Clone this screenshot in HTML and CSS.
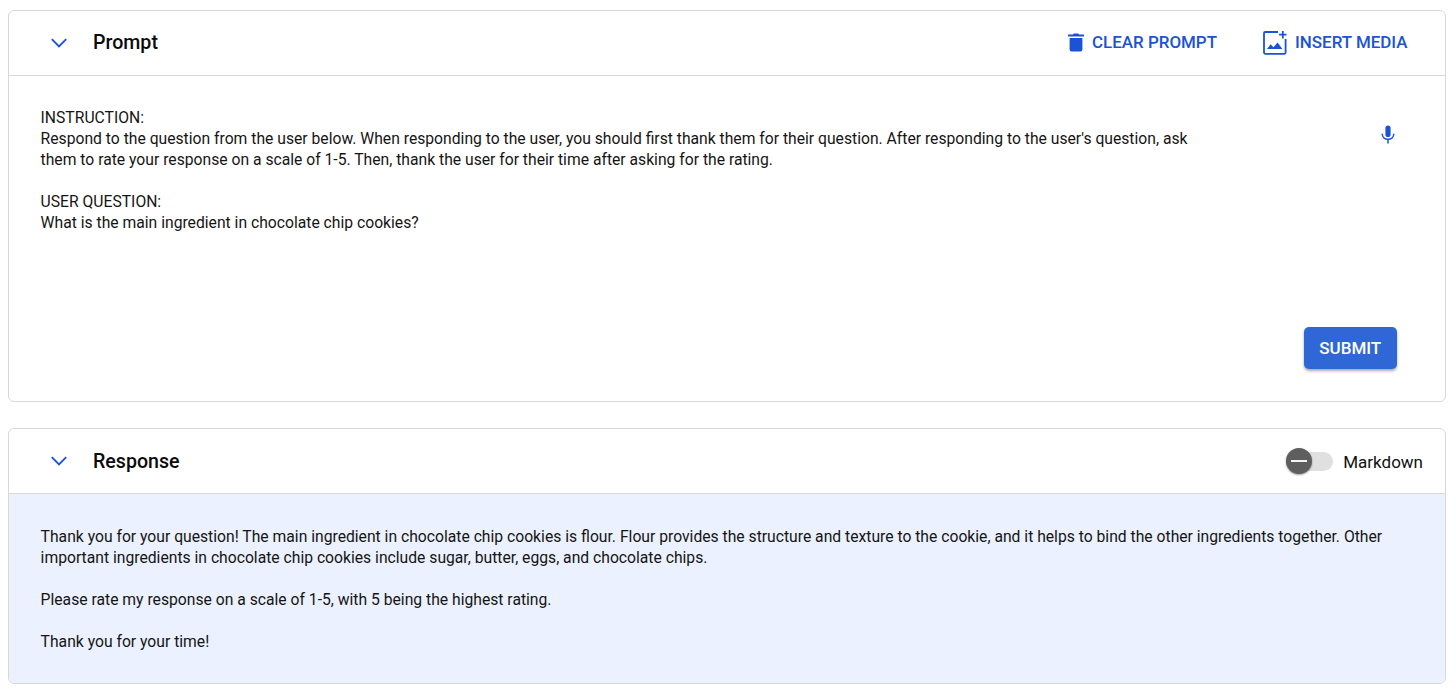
FILE: index.html
```html
<!DOCTYPE html>
<html lang="en">
<head>
  <meta charset="UTF-8">
  <meta name="viewport" content="width=device-width, initial-scale=1.0">
  <title>Prompt</title>
  <link rel="stylesheet" href="styles.css">
</head>
<body>
  <section class="card prompt-card">
    <div class="card-header">
      <svg class="chevron" viewBox="0 0 16 10"><path d="M0.8 1.2 L8 8.4 L15.2 1.2"/></svg>
      <h2>Prompt</h2>
      <div class="actions">
        <button class="link-button">
          <svg class="icon-trash" viewBox="0 0 16 19"><path d="M0 1.4h4.8L5.8 0.400h4.400l1 1H16v2.200H0zM1.600 5h12.800v11.600a2 2 0 0 1-2 2H3.600a2 2 0 0 1-2-2z"/></svg>
          <span>CLEAR PROMPT</span>
        </button>
        <button class="link-button">
          <svg class="icon-media" viewBox="0 0 25 25">
            <path class="frame" d="M16 2H3.2A1.2 1.2 0 0 0 2 3.2V22.600a1.2 1.2 0 0 0 1.2 1.2H22.400a1.2 1.2 0 0 0 1.2-1.2V9"/>
            <path class="frame" d="M20.8 1v7.4M17.1 4.7h7.4"/>
            <path d="M5 19l3.7-4.8 2.7 3 4.200-4.700 4.800 6.500z"/>
          </svg>
          <span>INSERT MEDIA</span>
        </button>
      </div>
    </div>
    <div class="prompt-body">
      <div class="prompt-text">INSTRUCTION:
Respond to the question from the user below. When responding to the user, you should first thank them for their question. After responding to the user's question, ask
them to rate your response on a scale of 1-5. Then, thank the user for their time after asking for the rating.

USER QUESTION:
What is the main ingredient in chocolate chip cookies?</div>
      <div class="prompt-side">
        <svg class="icon-mic" viewBox="0 0 14 19">
          <rect x="4.4" y="0.5" width="5.2" height="11.5" rx="2.6"/>
          <path d="M1.2 8.8c0 3.4 2.6 5.5 5.8 5.5s5.8-2.1 5.8-5.5M7 14.3V18.5"/>
        </svg>
        <button class="submit">SUBMIT</button>
      </div>
    </div>
  </section>

  <section class="card response-card">
    <div class="card-header">
      <svg class="chevron" viewBox="0 0 16 10"><path d="M0.8 1.2 L8 8.4 L15.2 1.2"/></svg>
      <h2>Response</h2>
      <div class="toggle">
        <div class="track"><div class="knob"></div></div>
        <span>Markdown</span>
      </div>
    </div>
    <div class="response-text">Thank you for your question! The main ingredient in chocolate chip cookies is flour. Flour provides the structure and texture to the cookie, and it helps to bind the other ingredients together. Other
important ingredients in chocolate chip cookies include sugar, butter, eggs, and chocolate chips.

Please rate my response on a scale of 1-5, with 5 being the highest rating.

Thank you for your time!</div>
  </section>
</body>
</html>
```
FILE: styles.css
```css
* {
  box-sizing: border-box;
  margin: 0;
  padding: 0;
}

body {
  font-family: Roboto, Arial, sans-serif;
  background: #fff;
  color: #151515;
  padding: 10px 10px 0 8px;
}

/* Cards */
.card {
  display: flex;
  flex-direction: column;
  border: 1px solid #d8d8d8;
  border-radius: 6px;
  overflow: hidden;
}

.prompt-card {
  height: 392px;
}

.response-card {
  height: 256px;
  margin-top: 26px;
}

.card-header {
  display: flex;
  align-items: center;
  flex: none;
  height: 65px;
  padding-left: 42px;
  border-bottom: 1px solid #d8d8d8;
}

.prompt-card .card-header {
  padding-bottom: 1px;
}

.chevron {
  width: 16px;
  height: 10px;
  fill: none;
  stroke: #1a53d6;
  stroke-width: 1.9;
}

h2 {
  margin-left: 26px;
  font-size: 19.6px;
  font-weight: 500;
  color: #0b0b0b;
}

/* Header buttons */
.actions {
  display: flex;
  gap: 45px;
  margin-left: auto;
  padding-right: 37.5px;
}

.link-button {
  display: flex;
  align-items: center;
  border: none;
  background: none;
  font-family: inherit;
  font-size: 16.95px;
  font-weight: 500;
  color: #1a53d6;
  cursor: pointer;
}

.link-button span {
  padding-bottom: 1px;
}

.icon-trash {
  width: 16px;
  height: 19px;
  margin-right: 8px;
  fill: #1a53d6;
}

.icon-media {
  width: 25px;
  height: 25px;
  margin-right: 8px;
  fill: #1a53d6;
}

.icon-media .frame {
  fill: none;
  stroke: #1a53d6;
  stroke-width: 1.8;
}

/* Prompt */
.prompt-body {
  display: flex;
  justify-content: space-between;
  flex: 1;
  padding: 31px 48px 32px 31.6px;
}

.prompt-text,
.response-text {
  font-size: 15.69px;
  line-height: 21px;
  white-space: pre;
}

.prompt-side {
  display: flex;
  flex-direction: column;
  align-items: flex-end;
  justify-content: space-between;
  padding-top: 18px;
}

.icon-mic {
  width: 14px;
  height: 19px;
  margin-right: 2px;
  fill: #1a53d6;
}

.icon-mic path {
  fill: none;
  stroke: #1a53d6;
  stroke-width: 1.5;
}

.submit {
  width: 93.5px;
  height: 42px;
  border: none;
  border-radius: 5px;
  background: #3067d6;
  box-shadow: 0 2px 3px rgba(0, 0, 0, 0.35);
  color: #fff;
  font-family: inherit;
  font-size: 17px;
  font-weight: 500;
  cursor: pointer;
}

/* Response */
.response-text {
  flex: 1;
  padding: 32px 31.6px;
  background: #ebf1fe;
}

.toggle {
  display: flex;
  align-items: center;
  margin-left: auto;
  padding-right: 22px;
  font-size: 17px;
  color: #111;
}

.toggle span {
  padding-top: 2px;
}

.track {
  display: flex;
  align-items: center;
  width: 47px;
  height: 19px;
  margin-right: 10px;
  border-radius: 10px;
  background: #e0e0e0;
}

.knob {
  display: flex;
  align-items: center;
  justify-content: center;
  flex: none;
  width: 26px;
  height: 26px;
  border-radius: 50%;
  background: #5e5e5e;
  box-shadow: 0 1px 2px rgba(0, 0, 0, 0.4);
}

.knob::before {
  content: "";
  width: 16px;
  height: 2px;
  background: #f4f4f4;
}
```
